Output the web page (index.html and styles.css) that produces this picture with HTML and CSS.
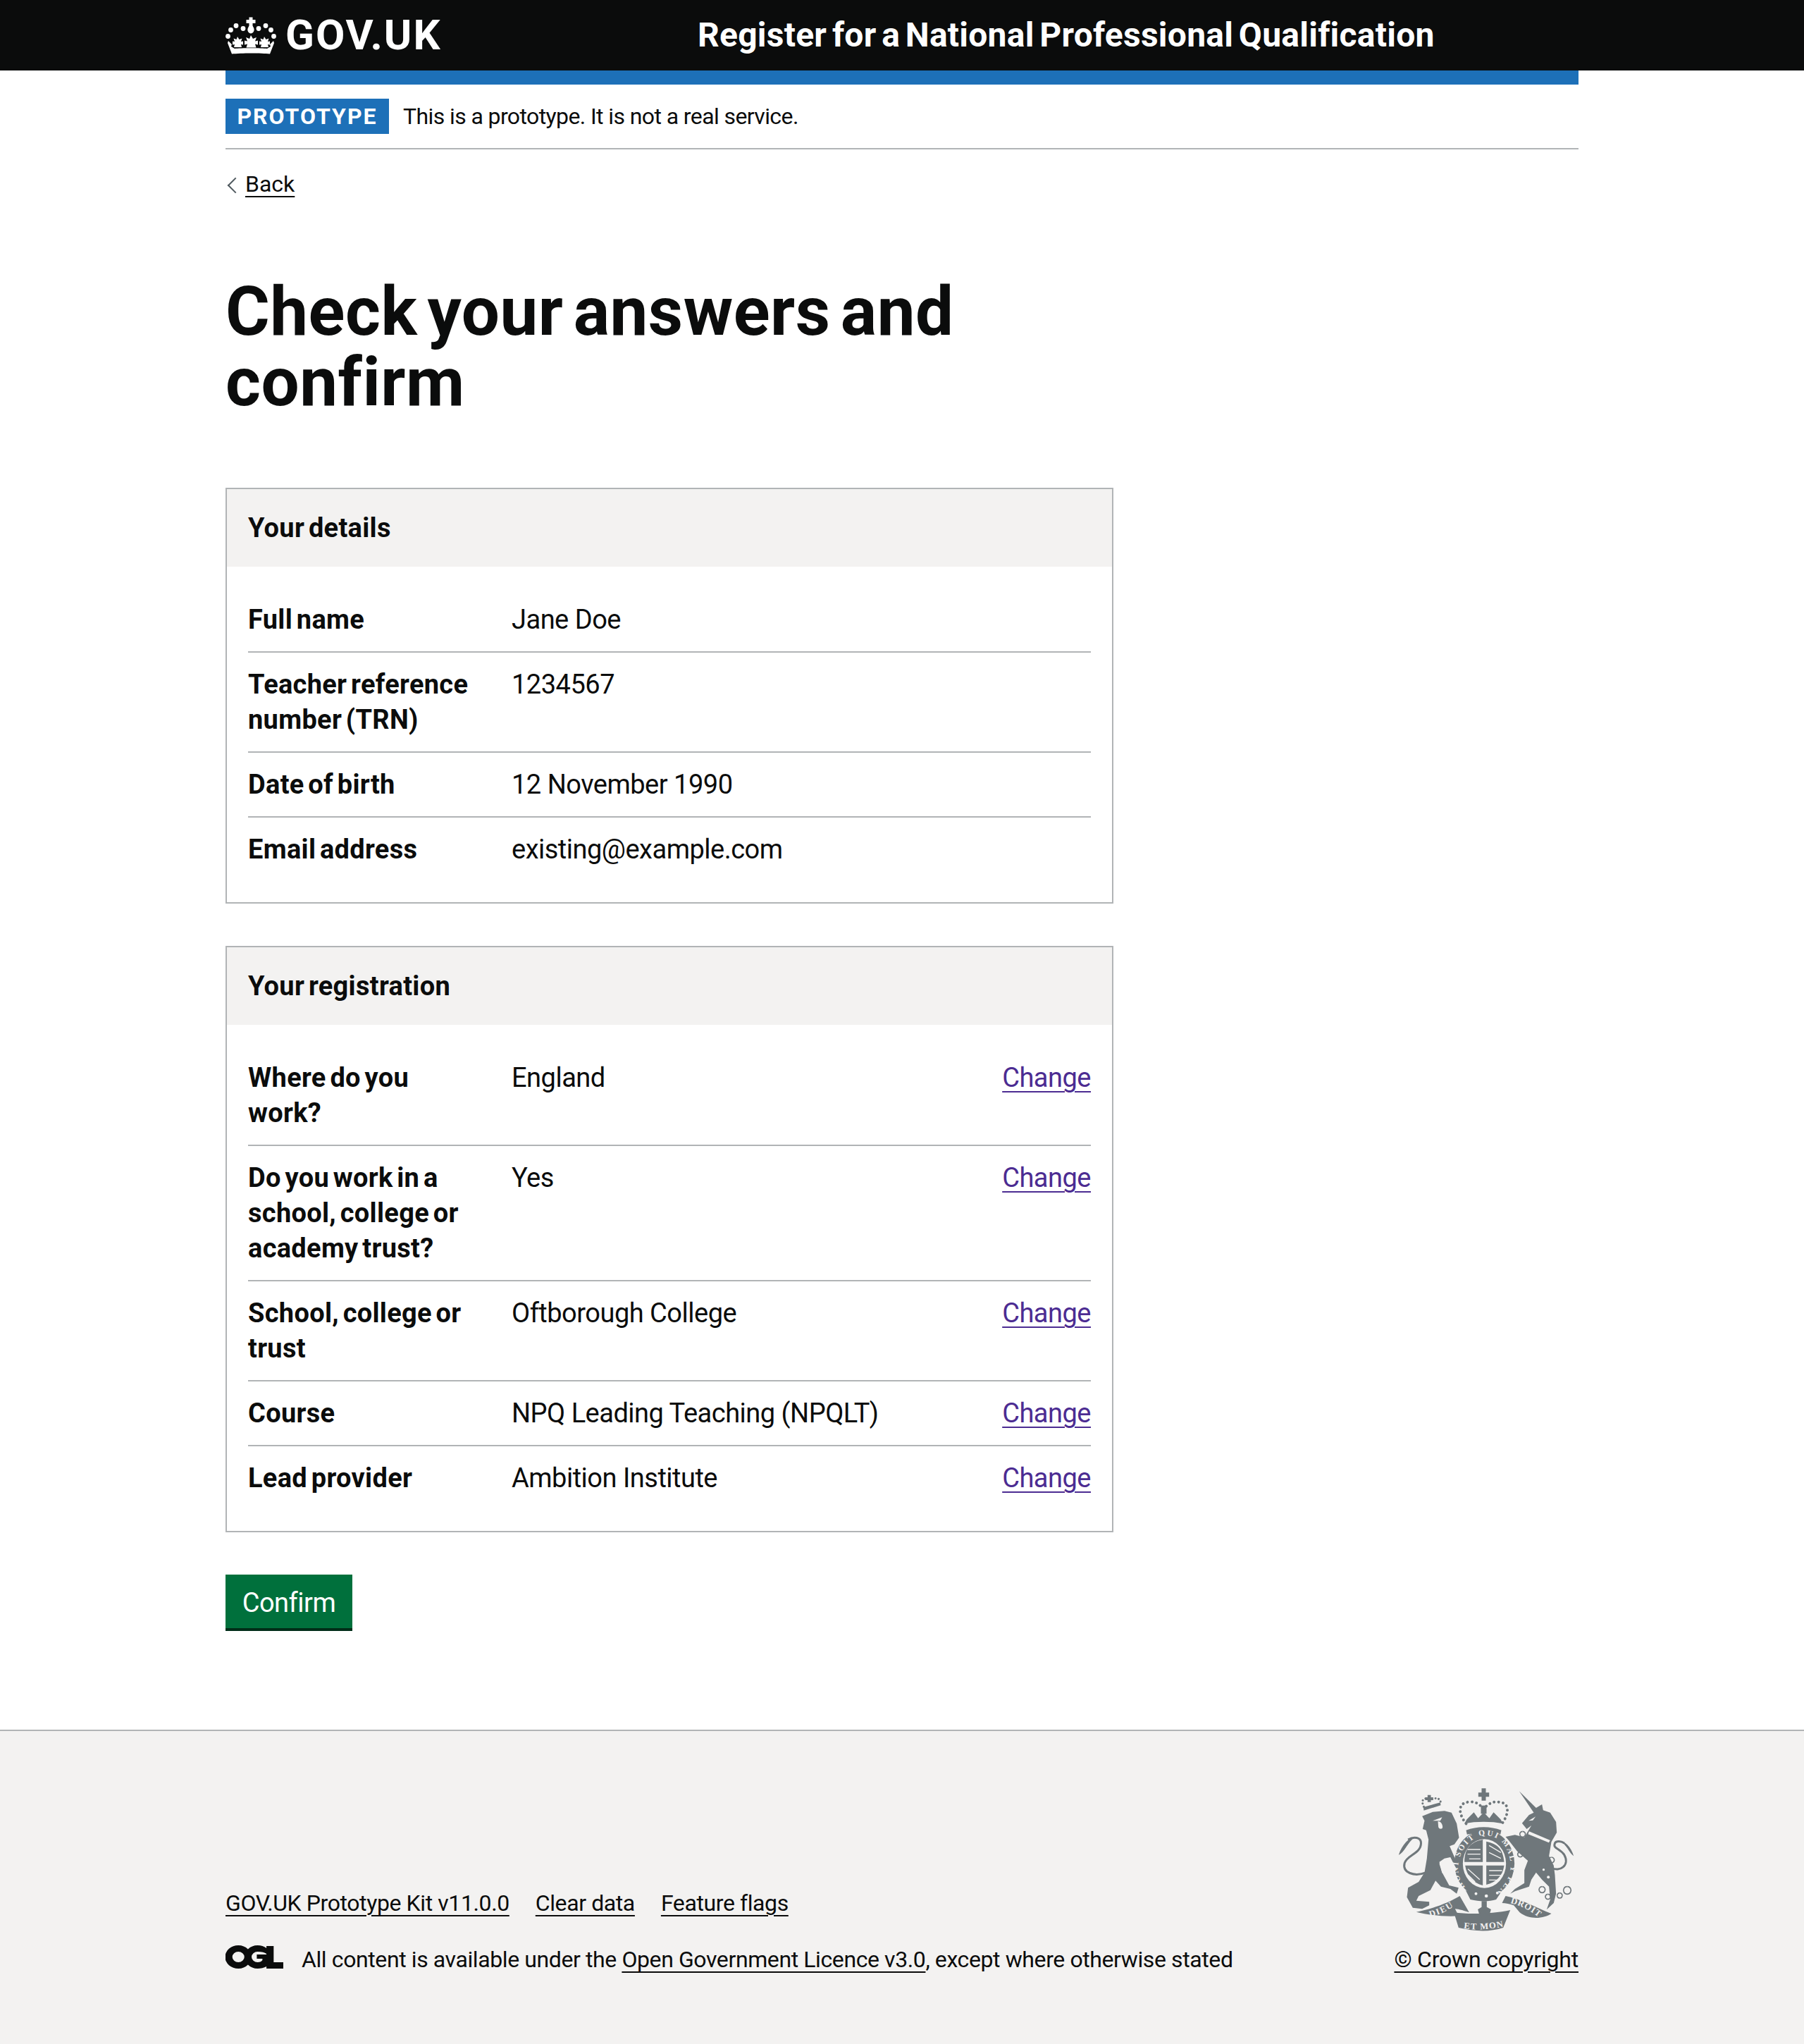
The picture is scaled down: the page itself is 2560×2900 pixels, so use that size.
FILE: index.html
```html
<!DOCTYPE html>
<html lang="en">
<head>
    <meta charset="UTF-8">
    <meta name="viewport" content="width=device-width, initial-scale=1.0">
    <title>Check your answers and confirm - Register for a National Professional Qualification</title>
    <link rel="stylesheet" href="styles.css">
</head>
<body>
    <header class="header">
        <div class="header-inner">
            <a class="logo" href="#">
                <svg class="crown" viewBox="0 0 72 54" aria-hidden="true">
                    <g fill="#fff">
                        <circle cx="3.5" cy="28.5" r="3.4"/>
                        <circle cx="7.500" cy="19.5" r="3.4"/>
                        <circle cx="15" cy="13.5" r="3.4"/>
                        <circle cx="25" cy="17.5" r="3.4"/>
                        <circle cx="47" cy="17.5" r="3.4"/>
                        <circle cx="57" cy="13.5" r="3.4"/>
                        <circle cx="64.5" cy="19.5" r="3.4"/>
                        <circle cx="68.5" cy="28.5" r="3.4"/>
                        <path d="M33.5 1.5h5v3.5h4v5h-4v3.5l1.5 3c2 4-1 8-4 8s-6-4-4-8l1.500-3V10h-4V5h4z"/>
                        <path d="M36 27l3 5 5-2-2 5.500 4-1v6l-4-1 1.500 5H29.500l1.500-5-4 1v-6l4 1-2-5.500 5 2z"/>
                        <path d="M17 29l2.500 4 4-1.500-1.500 4.500 3-.5v5l-3-.5 1 4h-11l1-4-3 .5v-5l3 .5-1.500-4.500 4 1.500z"/>
                        <path d="M55 29l2.500 4 4-1.500-1.500 4.500 3-.5v5l-3-.5 1 4h-11l1-4-3 .5v-5l3 .5-1.500-4.500 4 1.500z"/>
                        <path d="M4 35l5 5-1 3 5 3c8-1 38-1 46 0l5-3-1-3 5-5 1 3-6 15.500c-12-1.500-41-1.500-54 0L3 38z"/>
                    </g>
                </svg>
                <span class="logo-text">GOV.UK</span>
            </a>
            <a class="service-name" href="#">Register for a National Professional Qualification</a>
        </div>
    </header>

    <div class="width-container">
        <div class="stripe"></div>
        <div class="phase-banner">
            <strong class="tag">Prototype</strong>
            <span class="phase-text">This is a prototype. It is not a real service.</span>
        </div>
        <a class="back-link" href="#">Back</a>

        <main class="main">
            <h1 class="title">Check your answers and confirm</h1>

            <section class="card">
                <h2 class="card-title">Your details</h2>
                <dl class="summary">
                    <div class="row">
                        <dt>Full name</dt>
                        <dd>Jane Doe</dd>
                    </div>
                    <div class="row">
                        <dt>Teacher reference number (TRN)</dt>
                        <dd>1234567</dd>
                    </div>
                    <div class="row">
                        <dt>Date of birth</dt>
                        <dd>12 November 1990</dd>
                    </div>
                    <div class="row">
                        <dt>Email address</dt>
                        <dd>existing@example.com</dd>
                    </div>
                </dl>
            </section>

            <section class="card">
                <h2 class="card-title">Your registration</h2>
                <dl class="summary">
                    <div class="row">
                        <dt>Where do you work?</dt>
                        <dd>England</dd>
                        <dd class="action"><a href="#">Change</a></dd>
                    </div>
                    <div class="row">
                        <dt>Do you work in a school, college or academy trust?</dt>
                        <dd>Yes</dd>
                        <dd class="action"><a href="#">Change</a></dd>
                    </div>
                    <div class="row">
                        <dt>School, college or trust</dt>
                        <dd>Oftborough College</dd>
                        <dd class="action"><a href="#">Change</a></dd>
                    </div>
                    <div class="row">
                        <dt>Course</dt>
                        <dd>NPQ Leading Teaching (NPQLT)</dd>
                        <dd class="action"><a href="#">Change</a></dd>
                    </div>
                    <div class="row">
                        <dt>Lead provider</dt>
                        <dd>Ambition Institute</dd>
                        <dd class="action"><a href="#">Change</a></dd>
                    </div>
                </dl>
            </section>

            <button class="button" type="submit">Confirm</button>
        </main>
    </div>

    <footer class="footer">
        <div class="footer-inner">
            <div class="meta">
                <ul class="footer-links">
                    <li><a href="#">GOV.UK Prototype Kit v11.0.0</a></li>
                    <li><a href="#">Clear data</a></li>
                    <li><a href="#">Feature flags</a></li>
                </ul>
                <div class="licence">
                    <svg class="ogl" viewBox="0 0 72 33" preserveAspectRatio="none" aria-hidden="true">
                        <path fill="#0b0c0c" fill-rule="evenodd" d="M16 0a16 16 0 0 1 12 5.500A16 16 0 0 1 40 0c4.500 0 8 1.500 11 4V1h9v23h12v9H51v-3c-3 2-7 3-11 3a16 16 0 0 1-12-5.500A16 16 0 0 1 16 33 16 16 0 0 1 16 0zm0 9a7.500 7.500 0 1 0 0 15 7.500 7.500 0 0 0 0-15zm24 0a7.500 7.500 0 1 0 0 15c3 0 5-1 6-3v-2h-7v-6h12V12c-2-2-6-3-11-3z"/>
                    </svg>
                    <span>All content is available under the <a href="#">Open Government Licence v3.0</a>, except where otherwise stated</span>
                </div>
            </div>
            <div class="copyright">
                <svg class="crest" viewBox="100 105 755 615" aria-hidden="true">
                    <g fill="#6f777b">
                        <!-- lion -->
                        <path d="M205 230L250 212 300 208 330 215 352 262 362 322 342 350 322 358 358 440 368 462 345 448 325 405 300 410 278 425 290 470 320 525 360 535 352 560 325 540 285 530 262 505 240 545 190 570 180 590 235 595 235 610 205 625 165 620 140 575 145 535 190 510 215 470 225 410 232 330 222 290 207 285 215 250Z"/>
                        <path d="M105 395C130 385 140 345 175 318 150 320 120 350 105 395Z"/>
                        <!-- unicorn -->
                        <path d="M618 124L690 195 715 180 720 205 750 215 775 255 778 300 755 340 745 400 765 440 770 480 775 560 765 600 735 628 750 585 745 530 715 500 690 470 670 500 660 530 600 550 580 560 600 540 640 515 640 460 655 420 610 380 575 335 560 318 600 310 640 320 670 270 650 285 630 260 660 225 680 215Z"/>
                        <path d="M850 400C830 385 820 350 790 335 810 335 840 360 850 400Z"/>
                        <!-- crowns -->
                        <path d="M458 112h18v18h14v18h-14v16h-18v-16h-14v-18h14z"/>
                        <path d="M455 185h24v35h-24z"/>
                        <path d="M385 262l10-18 30-30 18 25 24-25 24 25 18-25 30 30 10 18c-50-10-114-10-164 0z"/>
                        <path d="M392 290c45-18 105-18 150 0l-4 18c-40-10-102-10-142 0z"/>
                        <path d="M228 140h14v10h10v12h-10v8h-14v-8h-10v-12h10z"/>
                        <path d="M210 192l72-20 2 12-72 22z"/>
                        <!-- garter and shield -->
                        <ellipse cx="470" cy="432" rx="128" ry="142"/>
                        <path d="M390 545c50 25 110 25 160-5l-30 45c-30 10-70 10-110 0z"/>
                        <!-- ribbon -->
                        <path d="M180 638c60-10 140-40 185-68l40 70c-15-5-45-15-60-15l15 30c-60 5-130-5-180-17z"/>
                        <path d="M340 640c70 10 170 5 240-10l-30 75c-60 20-125 15-190 0z"/>
                        <path d="M545 600l15-30c60 10 130 50 195 75-30 20-90 30-135-5l-25-30c-15-5-35-10-50-10z"/>
                        <path d="M458 592h22v25l18 10-6 22-14 18h-16l-14-18-6-22 16-10z"/>
                    </g>
                    <g fill="none" stroke="#6f777b">
                        <path stroke-width="9" d="M222 470C170 490 120 470 130 430 140 395 200 390 200 345 200 320 170 315 145 330"/>
                        <path stroke-width="9" d="M755 450C790 470 835 440 810 395 790 365 760 370 770 345 775 335 795 335 810 345"/>
                        <path stroke-width="9" stroke-linecap="round" stroke-dasharray="0.1 14" d="M212 190C200 165 208 155 225 155 235 160 245 160 255 155 282 150 288 170 280 180"/>
                        <path stroke-width="12" stroke-linecap="round" stroke-dasharray="0.1 19" d="M392 262C358 220 355 172 405 170 435 165 455 185 465 200 480 185 500 165 530 170 580 172 575 220 545 262"/>
                        <path stroke-width="5" d="M715 530a13 13 0 1 0 1 0M740 562a11 11 0 1 0 1 0M790 557a11 11 0 1 0 1 0M822 530a16 16 0 1 0 1 0M632 295a12 12 0 1 0 1 0M755 405a12 12 0 1 0 1 0M622 382a11 11 0 1 0 1 0"/>
                    </g>
                    <g fill="#f3f2f1">
                        <path d="M250 250l40-15-8 15zM272 252c10 0 20 10 20 25 0 10-15 10-18 0z"/>
                        <path d="M658 250l30-18-12 16z"/>
                        <path d="M660 295l90 38-6 10-88-36z"/>
                        <path d="M300 415l25-8 25 45-20 40-40-20-12-40z"/>
                        <ellipse cx="470" cy="432" rx="92" ry="104"/>
                        <circle cx="434" cy="560" r="6"/>
                        <circle cx="478" cy="570" r="7"/>
                        <circle cx="525" cy="557" r="6"/>
                        <circle cx="742" cy="490" r="6"/>
                        <circle cx="722" cy="458" r="5"/>
                    </g>
                    <g fill="#6f777b">
                        <path d="M385 425c0-55 25-85 78-95v95zM478 338c50 10 72 35 76 87h-76zM388 440h75v85c-40-10-68-40-75-85zM478 440h76c-6 45-35 72-76 82z"/>
                    </g>
                    <g fill="none" stroke="#f3f2f1" stroke-width="4">
                        <path d="M398 372h55M398 392h55M405 412h48M490 355l50 30M490 385l50 25M400 455l50 45M400 480l30 30M490 462h55M490 482h50M490 502h35"/>
                    </g>
                    <g class="crest-text">
                        <path id="garter" fill="none" d="M388 532C365 505 358 480 358 448 358 380 415 312 470 312 530 312 570 350 582 430 585 480 560 520 530 548"/>
                        <text font-size="34"><textPath href="#garter" textLength="660">HONI SOIT QUI MAL Y PENSE</textPath></text>
                        <path id="dieu" fill="none" d="M238 660C280 650 310 635 350 606"/>
                        <text font-size="38"><textPath href="#dieu" textLength="110">DIEU</textPath></text>
                        <path id="etmon" fill="none" d="M382 708C430 716 500 712 552 700"/>
                        <text font-size="38"><textPath href="#etmon" textLength="170">ET MON</textPath></text>
                        <path id="droit" fill="none" d="M580 600C620 610 665 630 700 660"/>
                        <text font-size="38"><textPath href="#droit" textLength="135">DROIT</textPath></text>
                    </g>
                </svg>
                <a class="copyright-link" href="#">© Crown copyright</a>
            </div>
        </div>
    </footer>
</body>
</html>
```

FILE: styles.css
```css
* {
    box-sizing: border-box;
}
body {
    margin: 0;
    min-height: 2900px;
    display: flex;
    flex-direction: column;
    font-family: Roboto, "Noto Sans", sans-serif;
    font-size: 38px;
    line-height: 50px;
    color: #0b0c0c;
    background-color: #fff;
}
a {
    color: #0b0c0c;
    text-decoration: underline;
    text-decoration-thickness: 2px;
    text-underline-offset: 6px;
}
.width-container, .header-inner, .footer-inner {
    width: 1920px;
    margin: 0 auto;
}
.header {
    background-color: #0b0c0c;
    height: 100px;
}
.header-inner {
    display: flex;
    align-items: center;
    height: 100px;
}
.header a {
    color: #fff;
    text-decoration: none;
}
.logo {
    display: flex;
    align-items: center;
    width: 670px;
}
.crown {
    width: 72px;
    height: 54px;
    margin-right: 13px;
}
.logo-text {
    font-size: 60px;
    font-weight: 700;
    line-height: 60px;
    letter-spacing: 2px;
}
.service-name {
    font-size: 48px;
    font-weight: 700;
    line-height: 50px;
    letter-spacing: 0.25px;
    word-spacing: -4.5px;
}
.stripe {
    height: 20px;
    background-color: #1d70b8;
}
.phase-banner {
    display: flex;
    align-items: center;
    height: 92px;
    padding-top: 20px;
    padding-bottom: 20px;
    border-bottom: 2px solid #b1b4b6;
    font-size: 32px;
}
.phase-text {
    letter-spacing: -0.6px;
}
.tag {
    width: 232px;
    height: 50px;
    margin-right: 20px;
    text-align: center;
    background-color: #1d70b8;
    color: #fff;
    font-size: 32px;
    font-weight: 700;
    line-height: 50px;
    letter-spacing: 2px;
    text-transform: uppercase;
}
.back-link {
    display: block;
    width: fit-content;
    position: relative;
    margin-top: 29px;
    padding-left: 28px;
    font-size: 32px;
    line-height: 40px;
}
.back-link::before {
    content: "";
    position: absolute;
    left: 6px;
    top: 14px;
    width: 14px;
    height: 14px;
    border-left: 2px solid #505a5f;
    border-bottom: 2px solid #505a5f;
    transform: rotate(45deg);
}
.main {
    padding-top: 111px;
    padding-bottom: 140px;
}
.title {
    width: 1260px;
    margin: 0 0 100px;
    font-size: 96px;
    font-weight: 700;
    line-height: 100px;
    letter-spacing: 0.5px;
    word-spacing: -10px;
}
.card {
    width: 1260px;
    margin-bottom: 60px;
    border: 2px solid #b1b4b6;
}
.card-title {
    margin: 0;
    padding: 30px;
    height: 110px;
    background-color: #f3f2f1;
    font-size: 38px;
    font-weight: 700;
    line-height: 50px;
    letter-spacing: 0.3px;
    word-spacing: -4px;
}
.summary {
    margin: 0;
    padding: 30px;
}
.row {
    display: grid;
    grid-template-columns: 374px 1fr auto;
    border-bottom: 2px solid #b1b4b6;
}
.row:last-child {
    border-bottom: none;
}
.row dt {
    padding: 20px 40px 20px 0;
    font-weight: 700;
    letter-spacing: 0.3px;
    word-spacing: -4px;
}
.row dd {
    margin: 0;
    padding: 20px 0;
    letter-spacing: -0.5px;
}
.action a {
    color: #4c2c92;
}
.button {
    display: block;
    width: 180px;
    height: 80px;
    padding: 4px 0 0;
    border: none;
    border-bottom: 4px solid #002d18;
    background-color: #00703c;
    color: #fff;
    font-family: inherit;
    font-size: 38px;
    letter-spacing: -0.5px;
}
.footer {
    flex-grow: 1;
    padding-top: 79px;
    border-top: 2px solid #b1b4b6;
    background-color: #f3f2f1;
    font-size: 32px;
    line-height: 40px;
    letter-spacing: -0.4px;
}
.footer-inner {
    display: flex;
    justify-content: space-between;
    align-items: flex-end;
}
.footer-links {
    display: flex;
    gap: 37px;
    margin: 0 0 40px;
    padding: 0;
    list-style: none;
}
.licence {
    display: flex;
    align-items: flex-start;
}
.ogl {
    width: 82px;
    height: 33px;
    margin-right: 26px;
}
.copyright {
    display: flex;
    flex-direction: column;
    align-items: flex-end;
}
.copyright-link {
    letter-spacing: -0.2px;
}
.crest {
    width: 252px;
    height: 205px;
    margin-right: 5px;
    margin-bottom: 20px;
    overflow: visible;
}
.crest-text {
    fill: #f3f2f1;
    font-family: "Liberation Serif", serif;
    font-weight: 700;
    letter-spacing: 0;
}
```
